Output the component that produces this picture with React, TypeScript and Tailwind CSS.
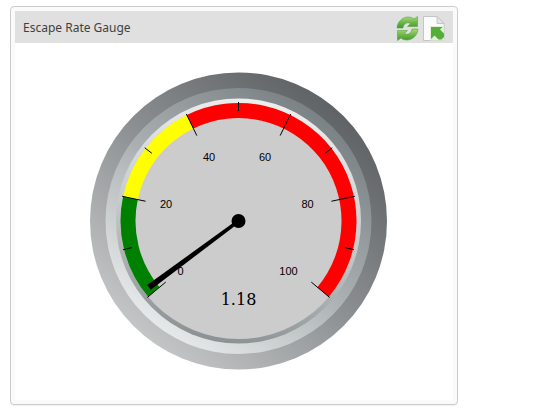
import React from 'react';

const cx = 238.5;
const cy = 221;

// value 0..100 maps to -130..130 degrees from straight up
const polar = (value: number, r: number) => {
  const a = ((-130 + value * 2.6) * Math.PI) / 180;
  return [cx + r * Math.sin(a), cy - r * Math.cos(a)];
};

const arc = (from: number, to: number, r1: number, r2: number) => {
  const [x1, y1] = polar(from, r1);
  const [x2, y2] = polar(to, r1);
  const [x3, y3] = polar(to, r2);
  const [x4, y4] = polar(from, r2);
  const large = (to - from) * 2.6 > 180 ? 1 : 0;
  return `M${x1} ${y1}A${r1} ${r1} 0 ${large} 1 ${x2} ${y2}L${x3} ${y3}A${r2} ${r2} 0 ${large} 0 ${x4} ${y4}Z`;
};

const sectors = [
  { from: 0, to: 20, color: '#008000' },
  { from: 20, to: 40, color: '#ffff00' },
  { from: 40, to: 100, color: '#ff0000' },
];

const labels = [
  { text: '0', x: 180.5, y: 275 },
  { text: '20', x: 166, y: 208 },
  { text: '40', x: 209, y: 161 },
  { text: '60', x: 265, y: 161 },
  { text: '80', x: 307.5, y: 208 },
  { text: '100', x: 288.5, y: 275 },
];

const Gauge = () => (
  <svg width="297" height="298" viewBox="90 72 297 298" className="block">
    <defs>
      <linearGradient id="outer" x1="0.85" y1="0.1" x2="0.15" y2="0.9">
        <stop offset="0" stopColor="#5c6063" />
        <stop offset="0.5" stopColor="#8d9092" />
        <stop offset="1" stopColor="#c6c8c9" />
      </linearGradient>
      <linearGradient id="middle" x1="0.8" y1="0.1" x2="0.2" y2="0.9">
        <stop offset="0" stopColor="#7b8285" />
        <stop offset="0.5" stopColor="#aab0b2" />
        <stop offset="1" stopColor="#e6e9e9" />
      </linearGradient>
      <linearGradient id="bevel" x1="0.6" y1="0" x2="0.4" y2="1">
        <stop offset="0" stopColor="#eeeeee" />
        <stop offset="0.5" stopColor="#c8cccc" />
        <stop offset="1" stopColor="#8b9193" />
      </linearGradient>
    </defs>
    <circle cx={cx} cy={cy} r="148.5" fill="url(#outer)" />
    <circle cx={cx} cy={cy} r="133" fill="url(#middle)" />
    <circle cx={cx} cy={cy} r="122.5" fill="url(#bevel)" />
    <circle cx={cx} cy={cy} r="118" fill="#cccccc" />
    {sectors.map(s => (
      <path key={s.from} d={arc(s.from, s.to, 118, 103)} fill={s.color} />
    ))}
    {[0, 10, 20, 30, 40, 50, 60, 70, 80, 90, 100].map(v => {
      const major = v % 20 === 0;
      const [x1, y1] = polar(v, 119);
      const [x2, y2] = polar(v, major ? 95 : 110);
      return <line key={v} x1={x1} y1={y1} x2={x2} y2={y2} stroke="#000" strokeWidth="1" />;
    })}
    {labels.map(l => (
      <text key={l.text} x={l.x} y={l.y} textAnchor="middle" fontSize="11" fill="#000" fontFamily="'Liberation Sans', sans-serif">
        {l.text}
      </text>
    ))}
    <text x={cx} y="305" textAnchor="middle" fontSize="16" fill="#000" fontFamily="'DejaVu Serif', serif">
      1.18
    </text>
    <path d="M237.500 219.800L239.500 222.400L150.800 289.800L147.200 285Z" fill="#000" />
    <circle cx={cx} cy={cy} r="7" fill="#000" />
  </svg>
);

const RefreshIcon = () => (
  <svg width="23" height="25" viewBox="0 0 23 25" className="block">
    <defs>
      <linearGradient id="refresh" x1="0" y1="0" x2="0" y2="1">
        <stop offset="0" stopColor="#a9d977" />
        <stop offset="0.5" stopColor="#6fb84b" />
        <stop offset="1" stopColor="#3c9a30" />
      </linearGradient>
    </defs>
    <path d="M1 12C1.500 5 7 1 12 1C15 1 17 2 18 3L21.500 0.500V10.500H11.500L14.500 7.500C11 5.500 7.500 8 7 12Z" fill="url(#refresh)" stroke="#56a63a" strokeWidth="0.6" />
    <path d="M22 13C21.500 20 16 24 11 24C8 24 6 23 5 22L1.500 24.500V14.500H11.500L8.500 17.500C12 19.500 15.500 17 16 13Z" fill="url(#refresh)" stroke="#56a63a" strokeWidth="0.6" />
  </svg>
);

const ExportIcon = () => (
  <svg width="22" height="25" viewBox="0 0 22 25" className="block">
    <path d="M0.500 0.500H14L21 7.500V24.500H0.500Z" fill="#fbfbfb" stroke="#c4c6c6" strokeWidth="1" />
    <path d="M14 0.500V7.500H21Z" fill="#e4e6e6" stroke="#c4c6c6" strokeWidth="1" />
    <rect x="7" y="10" width="14" height="14.500" fill="#e2efd6" />
    <path d="M8 11H19.500L17 13.500L21 17.500V21L18.500 23.500H15.500L11.500 19.500L8 23Z" fill="#55ad3a" />
  </svg>
);

export default function App() {
  return (
    <div className="w-[558px] h-[411px] bg-white overflow-hidden pl-[10px] pt-[6px]">
      <div className="w-[448px] h-[399px] border border-[#cccccc] rounded-[4px] p-[4px] flex flex-col bg-[#fafafa] shadow-[0_1px_1px_rgba(0,0,0,0.06)]">
        <div className="h-[32px] shrink-0 bg-[#e0e0e0] flex items-center justify-between pl-2 pr-2 pt-[1px]">
          <span className="text-[12px] text-[#3f3f3f]" style={{ fontFamily: "'Noto Sans', sans-serif" }}>Escape Rate Gauge</span>
          <div className="flex items-center gap-[4px] mt-[1px]">
            <RefreshIcon />
            <ExportIcon />
          </div>
        </div>
        <div className="flex-1 bg-white pt-[29px] pl-[75px]">
          <Gauge />
        </div>
      </div>
    </div>
  );
}
